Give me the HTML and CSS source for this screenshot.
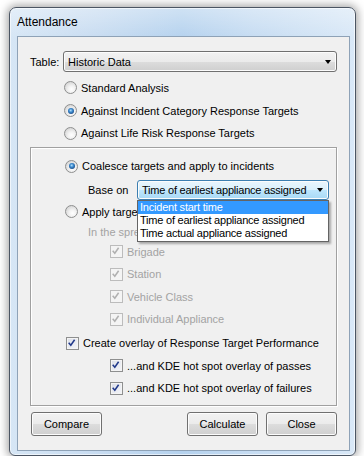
FILE: index.html
```html
<!DOCTYPE html>
<html>
<head>
<meta charset="utf-8">
<link rel="stylesheet" href="styles.css">
</head>
<body>
<div class="window">
  <div class="titlebar">Attendance</div>
  <div class="client">
    <div class="table-row">
      <span class="lbl">Table:</span>
      <div class="combo">
        <span class="combo-text">Historic Data</span>
        <span class="arrow"></span>
      </div>
    </div>
    <div class="options">
      <div class="opt h23"><span class="radio"></span><span>Standard Analysis</span></div>
      <div class="opt h23"><span class="radio on"></span><span>Against Incident Category Response Targets</span></div>
      <div class="opt h22"><span class="radio"></span><span>Against Life Risk Response Targets</span></div>
    </div>
    <div class="group">
      <div class="opt h22 lvl1"><span class="radio on"></span><span>Coalesce targets and apply to incidents</span></div>
      <div class="base-row">
        <span class="base-lbl">Base on</span>
        <div class="combo focus">
          <span class="combo-text narrow">Time of earliest appliance assigned</span>
          <span class="arrow"></span>
        </div>
        <div class="dropdown">
          <div class="item sel">Incident start time</div>
          <div class="item">Time of earliest appliance assigned</div>
          <div class="item">Time actual appliance assigned</div>
        </div>
      </div>
      <div class="opt h23 lvl1"><span class="radio"></span><span>Apply targets to individual appliances</span></div>
      <div class="opt h17 lvl2 disabled"><span>In the spreadsheet, show results by:</span></div>
      <div class="opt h23 lvl3 disabled"><span class="check dis"><svg viewBox="0 0 13 13"><path d="M3 6.5 L5.5 9.5 L10 3"/></svg></span><span>Brigade</span></div>
      <div class="opt h22 lvl3 disabled"><span class="check dis"><svg viewBox="0 0 13 13"><path d="M3 6.5 L5.5 9.5 L10 3"/></svg></span><span>Station</span></div>
      <div class="opt h23 lvl3 disabled"><span class="check dis"><svg viewBox="0 0 13 13"><path d="M3 6.5 L5.5 9.5 L10 3"/></svg></span><span>Vehicle Class</span></div>
      <div class="opt h22 lvl3 disabled"><span class="check dis"><svg viewBox="0 0 13 13"><path d="M3 6.5 L5.5 9.5 L10 3"/></svg></span><span>Individual Appliance</span></div>
      <div class="opt h22 lvl1b gap2"><span class="check"><svg viewBox="0 0 13 13"><path d="M3 6.5 L5.5 9.5 L10 3"/></svg></span><span>Create overlay of Response Target Performance</span></div>
      <div class="opt h23 lvl3"><span class="check"><svg viewBox="0 0 13 13"><path d="M3 6.5 L5.5 9.5 L10 3"/></svg></span><span>...and KDE hot spot overlay of passes</span></div>
      <div class="opt h22 lvl3"><span class="check"><svg viewBox="0 0 13 13"><path d="M3 6.5 L5.5 9.5 L10 3"/></svg></span><span>...and KDE hot spot overlay of failures</span></div>
    </div>
    <div class="buttons">
      <button class="btn">Compare</button>
      <div class="spacer"></div>
      <button class="btn">Calculate</button>
      <button class="btn">Close</button>
    </div>
  </div>
</div>
</body>
</html>
```

FILE: styles.css
```css
html, body {
  margin: 0;
  padding: 0;
  background: #ffffff;
}
body {
  font-family: "Liberation Sans", Arial, sans-serif;
  font-size: 11px;
  color: #000;
  overflow: hidden;
}
.window {
  margin: 7px 0 0 9px;
  width: 347px;
  height: 449px;
  box-sizing: border-box;
  border: 1px solid #4b5563;
  border-radius: 7px 7px 6px 6px;
  background:
    linear-gradient(to bottom, rgba(255,255,255,0.35), rgba(255,255,255,0) 30px),
    linear-gradient(to right, #d6e6f5 0%, #c8dcf1 25%, #b5d2ee 50%, #c6dcf2 70%, #d9e8f7 100%);
  box-shadow: 0 0 8px 2px rgba(0, 0, 0, 0.35), inset 0 0 0 1px rgba(255,255,255,0.6);
  padding: 0 5px 4px 7px;
  display: flex;
  flex-direction: column;
}
.titlebar {
  height: 28px;
  line-height: 28px;
  font-size: 12px;
  color: #000;
  flex: none;
}
.client {
  flex: 1;
  border: 1px solid #8ea2b7;
  background: #f0f0f0;
  padding: 14px 12px 0 12px;
  display: flex;
  flex-direction: column;
}
.table-row {
  display: flex;
  align-items: center;
  height: 21px;
}
.lbl {
  width: 33px;
  flex: none;
}
.combo {
  position: relative;
  flex: 1;
  height: 21px;
  box-sizing: border-box;
  border: 1px solid #707070;
  border-radius: 3px;
  background: linear-gradient(to bottom, #f2f2f2 0%, #ebebeb 50%, #dddddd 50%, #cfcfcf 100%);
  box-shadow: inset 0 0 0 1px #fcfcfc;
  display: flex;
  align-items: center;
  padding-left: 4px;
}
.combo .arrow {
  position: absolute;
  right: 5px;
  top: 50%;
  margin-top: -2px;
  width: 0;
  height: 0;
  border-left: 3.5px solid transparent;
  border-right: 3.5px solid transparent;
  border-top: 4px solid #000;
}
.narrow {
  letter-spacing: -0.22px;
  white-space: nowrap;
}
.options {
  margin-top: 4px;
  padding-left: 34px;
}
.opt {
  display: flex;
  align-items: center;
  white-space: nowrap;
}
.h23 { height: 23px; }
.h22 { height: 22px; }
.h17 { height: 17px; }
.radio {
  position: relative;
  width: 13px;
  height: 13px;
  box-sizing: border-box;
  border-radius: 50%;
  border: 1px solid #8e8f8f;
  background: radial-gradient(circle at 60% 65%, #ffffff 0%, #f2f2f2 35%, #d4d4d4 80%, #c6c6c6 100%);
  margin-right: 4px;
  flex: none;
}
.radio.on::after {
  content: "";
  position: absolute;
  left: 2.5px;
  top: 2.5px;
  width: 6px;
  height: 6px;
  border-radius: 50%;
  background: radial-gradient(circle at 45% 40%, #b7e2fb 0%, #3c8bd0 35%, #19467f 80%, #1d3f6c 100%);
}
.check {
  width: 13px;
  height: 13px;
  box-sizing: border-box;
  border: 1px solid #8e8f8f;
  background: linear-gradient(135deg, #dcdfe8 0%, #f4f5f9 100%);
  box-shadow: inset 0 0 0 1px #f4f4f4;
  margin-right: 4px;
  flex: none;
  display: block;
}
.check svg {
  display: block;
  width: 11px;
  height: 11px;
}
.check svg path {
  fill: none;
  stroke: #21398a;
  stroke-width: 1.8;
  transform: translate(-1px, -1px);
}
.check.dis {
  border-color: #bcbcbc;
  background: #f4f4f4;
}
.check.dis svg path {
  stroke: #b0b0b0;
}
.disabled {
  color: #a3a3a3;
}
.group {
  margin-top: 3px;
  border: 1px solid #a0a0a0;
  box-shadow: inset 1px 1px 0 #ffffff, 1px 1px 0 #ffffff;
  padding: 7px 6px 2px 0;
  height: 259px;
  box-sizing: border-box;
}
.lvl1 { padding-left: 34px; }
.lvl1b { padding-left: 35px; }
.lvl2 { padding-left: 57px; }
.lvl3 { padding-left: 79px; }
.gap2 { margin-top: 2px; }
.base-row {
  position: relative;
  margin-top: 3px;
  height: 20px;
  display: flex;
  align-items: center;
  padding-left: 57px;
}
.base-lbl {
  width: 49px;
  flex: none;
}
.combo.focus {
  height: 20px;
  flex: none;
  width: 192px;
  border-color: #3c7fb1;
  background: linear-gradient(to bottom, #eaf6fd 0%, #d9f0fc 50%, #bee6fd 50%, #a7d9f5 100%);
  padding-left: 4px;
}
.dropdown {
  position: absolute;
  left: 106px;
  top: 20px;
  width: 192px;
  box-sizing: border-box;
  border: 1px solid #646464;
  background: #fff;
  box-shadow: 2px 2px 2px rgba(0, 0, 0, 0.3);
  padding: 0 0 1px 0;
  z-index: 5;
}
.item {
  height: 13px;
  line-height: 13px;
  padding-left: 2px;
  white-space: nowrap;
  letter-spacing: -0.22px;
}
.item.sel {
  background: #3399ff;
  color: #fff;
}
.buttons {
  display: flex;
  margin-top: 6px;
  padding-left: 1px;
}
.spacer { flex: 1; }
.btn {
  font-family: "Liberation Sans", Arial, sans-serif;
  font-size: 11px;
  color: #000;
  width: 71px;
  height: 24px;
  box-sizing: border-box;
  border: 1px solid #707070;
  border-radius: 3px;
  background: linear-gradient(to bottom, #f2f2f2 0%, #ebebeb 50%, #dddddd 50%, #cfcfcf 100%);
  box-shadow: inset 0 0 0 1px #fcfcfc;
  padding: 0;
  margin-left: 8px;
}
.btn:first-child { margin-left: 0; }
```
